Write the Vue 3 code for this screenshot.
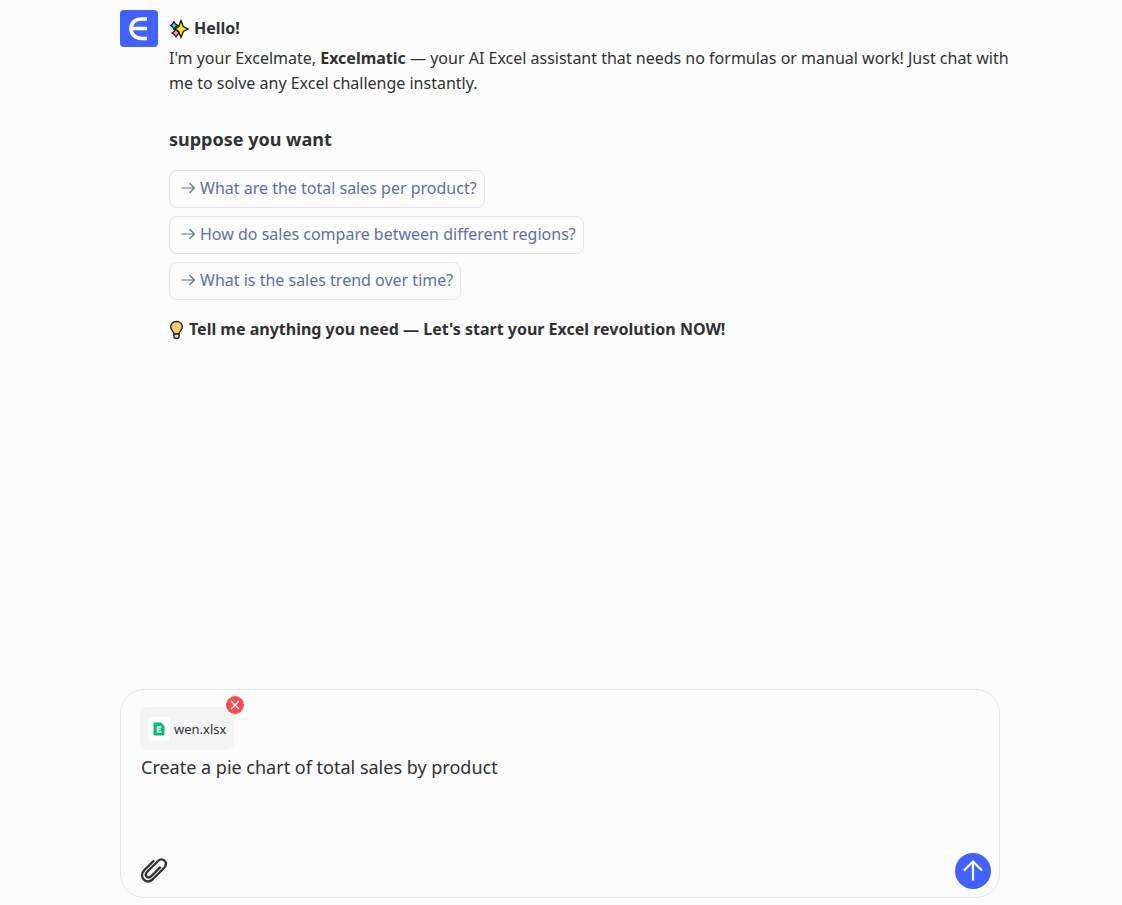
<template>
  <div class="chat-page">
    <main class="message">
      <svg class="avatar" viewBox="0 0 38 37" role="img" aria-label="Excelmatic">
        <rect width="38" height="37" rx="4" fill="#4261ff" />
        <path d="M27 9H21.500C15 9 11 13 11 18.500S15 28.500 21.500 28.500H27M11 18.500H27" fill="none" stroke="#fff" stroke-width="3.600" />
      </svg>

      <div class="message-body">
        <p class="hello">
          <svg class="sparkles" viewBox="0 0 20 20" aria-hidden="true">
            <path d="M5 2.500L6.500 5L9 6.500L6.500 8L5 10.500L3.500 8L1.500 6.500L3.500 5Z" fill="#45c8e8" stroke="#111" stroke-width="1.100" />
            <path d="M7 10L8.700 12.500L11 14L8.700 15.500L7 18L5.300 15.500L3 14L5.300 12.500Z" fill="#f59ac0" stroke="#111" stroke-width="1.100" />
            <path d="M12 1.500L14.300 7.500L19 10L14.300 12.500L12 18.500L9.700 12.500L6 10L9.700 7.500Z" fill="#ffe70a" stroke="#111" stroke-width="1.300" />
          </svg>
          <strong>Hello!</strong>
        </p>
        <p class="intro">
          I'm your Excelmate, <strong>Excelmatic</strong> — your AI Excel assistant that needs no formulas or manual work! Just chat with me to solve any Excel challenge instantly.
        </p>

        <h3>suppose you want</h3>

        <div class="suggestions">
          <button
            v-for="item in suggestions"
            :key="item"
            type="button"
            class="suggestion"
            @click="prompt = item"
          >
            <svg class="arrow" viewBox="0 0 14 12" aria-hidden="true">
              <path d="M0.500 6H13M8.500 1L13.300 6L8.500 11" />
            </svg>
            <span>{{ item }}</span>
          </button>
        </div>

        <p class="closing">
          <svg class="bulb" viewBox="0 0 15 20" aria-hidden="true">
            <path d="M5 14C5 11.500 1.700 10.500 1.700 6.800C1.700 3.500 4.200 1.500 7.500 1.500S13.300 3.500 13.300 6.800C13.300 10.500 10 11.500 10 14Z" fill="#ffca70" stroke="#222" stroke-width="1.400" />
            <path d="M5 14H10V16.500Q10 18.500 7.500 18.500T5 16.500Z" fill="#e4e4e4" stroke="#222" stroke-width="1.400" />
            <path d="M5.500 10.500L7.500 12L9.500 10.500" fill="none" stroke="#ffdc32" stroke-width="1.500" />
          </svg>
          <strong>Tell me anything you need — Let's start your Excel revolution NOW!</strong>
        </p>
      </div>
    </main>

    <form class="composer" @submit.prevent>
      <div v-if="fileName" class="file-chip">
        <span class="file-icon">
          <svg viewBox="0 0 12 14" aria-hidden="true">
            <path d="M1.500 0.500H8L11.500 4V12Q11.500 13.500 10 13.500H1.500Q0.500 13.500 0.500 12.500V1.500Q0.500 0.500 1.500 0.500Z" fill="#08bd72" />
            <path d="M8.500 5H4.500V10H8.500M4.500 7.500H8" fill="none" stroke="#fff" stroke-width="1.300" />
          </svg>
        </span>
        <span class="file-name">{{ fileName }}</span>
        <button type="button" class="remove-btn" aria-label="Remove file" @click="fileName = ''">
          <svg viewBox="0 0 18 18" aria-hidden="true">
            <path d="M5 5L13 13M13 5L5 13" />
          </svg>
        </button>
      </div>

      <textarea v-model="prompt" class="prompt" rows="3" aria-label="Message" spellcheck="false"></textarea>

      <div class="composer-actions">
        <button type="button" class="attach-btn" aria-label="Attach file">
          <svg viewBox="0 0 28 28" aria-hidden="true">
            <path d="M13.500 4L4 13.500C-1.500 19.500 6 28.500 12.500 22.500L24 11C29 5.500 22.500 -0.500 18 4L7.500 14.500C3.500 18.500 8 22.500 11.500 19L20 10.500" />
          </svg>
        </button>
        <button type="submit" class="send-btn" aria-label="Send">
          <svg viewBox="0 0 36 36" aria-hidden="true">
            <path d="M18 27.500V8.500M9 17.500L18 8.500L27 17.500" />
          </svg>
        </button>
      </div>
    </form>
  </div>
</template>

<script setup>
import { ref } from "vue";

const prompt = ref("Create a pie chart of total sales by product");
const fileName = ref("wen.xlsx");

const suggestions = [
  "What are the total sales per product?",
  "How do sales compare between different regions?",
  "What is the sales trend over time?",
];
</script>

<style>
body {
  margin: 0;
  background: #fcfcfc;
}
</style>

<style scoped>
.chat-page {
  display: flex;
  flex-direction: column;
  justify-content: space-between;
  gap: 24px;
  box-sizing: border-box;
  max-width: 882px;
  min-height: 100vh;
  margin: 0 auto;
  padding: 10px 2px 7px 0;
  color: #303133;
  font-family: "Noto Sans", "Segoe UI", sans-serif;
  font-size: 16px;
  line-height: 25px;
}

button,
textarea {
  font-family: inherit;
}

button {
  cursor: pointer;
}

.message {
  display: flex;
  align-items: flex-start;
  gap: 11px;
  margin-right: -16px;
}

.avatar {
  flex: none;
  width: 38px;
  height: 37px;
}

.message-body {
  flex: 1;
  min-width: 0;
}

p {
  margin: 0;
}

.hello {
  display: flex;
  align-items: center;
  gap: 5px;
  padding: 6px 0 5px;
}

.sparkles {
  width: 20px;
  height: 20px;
}

h3 {
  margin: 30px 0 17px;
  font-size: 18px;
  line-height: 27px;
}

.suggestions {
  display: flex;
  flex-direction: column;
  align-items: flex-start;
  gap: 8px;
}

.suggestion {
  display: flex;
  align-items: center;
  gap: 5px;
  min-height: 38px;
  padding: 5px 7px 7px 11px;
  border: 1px solid #e6e6e8;
  border-radius: 8px;
  background: transparent;
  color: #626fa5;
  font-size: 16px;
  line-height: 24px;
  text-align: left;
}

.arrow {
  flex: none;
  width: 14px;
  height: 12px;
  fill: none;
  stroke: currentColor;
  stroke-width: 1.2;
}

.closing {
  display: flex;
  align-items: center;
  gap: 5px;
  margin-top: 17px;
}

.bulb {
  flex: none;
  width: 15px;
  height: 20px;
}

.composer {
  display: flex;
  flex-direction: column;
  align-items: flex-start;
  padding: 17px 8px 8px 19px;
  border: 1px solid #e5e6ea;
  border-radius: 24px;
}

.file-chip {
  position: relative;
  display: flex;
  align-items: center;
  gap: 4px;
  height: 43px;
  padding: 0 8px;
  border-radius: 8px;
  background: #f4f4f5;
}

.file-icon {
  display: flex;
  align-items: center;
  justify-content: center;
  width: 22px;
  height: 24px;
  border-radius: 4px;
  background: #fff;
}

.file-icon svg {
  width: 12px;
  height: 14px;
}

.file-name {
  font-size: 13px;
  line-height: 20px;
}

.remove-btn {
  position: absolute;
  top: -11px;
  right: -10px;
  width: 18px;
  height: 18px;
  padding: 0;
  border: none;
  border-radius: 50%;
  background: #f44e51;
}

.remove-btn svg {
  display: block;
  fill: none;
  stroke: #fff;
  stroke-width: 1.3;
}

.prompt {
  display: block;
  box-sizing: border-box;
  width: 100%;
  margin-top: 3px;
  padding: 0 1px;
  border: none;
  outline: none;
  background: transparent;
  color: #303133;
  font-size: 18px;
  line-height: 28px;
  resize: none;
}

.composer-actions {
  display: flex;
  align-items: center;
  justify-content: space-between;
  width: 100%;
  margin-top: 16px;
}

.attach-btn {
  padding: 0;
  border: none;
  background: transparent;
  color: #333;
}

.attach-btn svg {
  display: block;
  width: 28px;
  height: 28px;
  fill: none;
  stroke: currentColor;
  stroke-width: 2.4;
  stroke-linecap: round;
}

.send-btn {
  width: 36px;
  height: 36px;
  padding: 0;
  border: none;
  border-radius: 50%;
  background: #4261ff;
}

.send-btn svg {
  display: block;
  fill: none;
  stroke: #fff;
  stroke-width: 2.2;
}
</style>
